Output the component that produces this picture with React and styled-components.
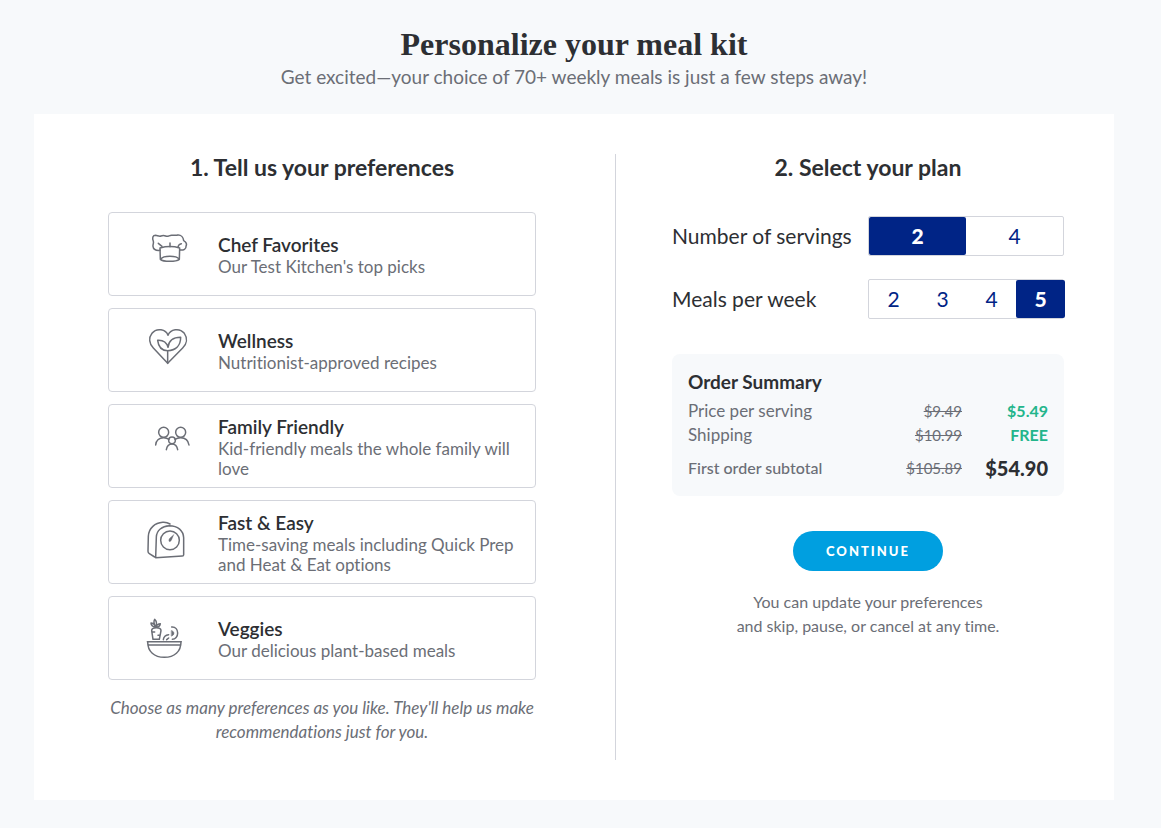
import React, { useState } from 'react';
import styled, { createGlobalStyle } from 'styled-components';

const GlobalStyle = createGlobalStyle`
  *, *::before, *::after {
    box-sizing: border-box;
  }

  body {
    margin: 0;
    background-color: #f7f9fb;
    color: #2d2f33;
    font-family: Lato, 'Open Sans', sans-serif;
    font-variant-ligatures: none;
  }

  h1, h2, h3, p {
    margin: 0;
  }
`;

const ChefIcon = () => (
  <Icon viewBox="-6 12 180 180" aria-hidden="true">
    <path d="M60 91C48 92 40 88 39 79C38 73 42 70 40 64C36 54 38 46 47 46C53 47 58 50 63 48C68 46 72 46 77 48C84 52 88 45 96 46C102 44 107 48 113 45C123 44 130 52 131 62C138 66 141 73 138 79C139 87 131 91 120 90" />
    <path d="M60 84C78 79 102 79 119 84M60 84L61 118C70 126 108 126 118 118L119 84" />
    <path d="M63 117C70 106 109 106 117 117M55 70L66 79M90 69V80M124 71C118 72 115 76 114 81" />
  </Icon>
);

const WellnessIcon = () => (
  <Icon viewBox="-6 0 180 180" aria-hidden="true">
    <path d="M84 46C78 28 50 22 36 40C25 54 28 71 40 84L83 130L128 84C141 71 143 54 133 40C118 22 91 28 84 46Z" />
    <path d="M83 130V92M83 92C64 92 55 79 53 61C69 60 80 67 84 82C86 63 98 52 122 52C122 76 108 91 83 92Z" />
  </Icon>
);

const FamilyIcon = () => (
  <Icon viewBox="-6 3 180 180" aria-hidden="true">
    <circle cx="71" cy="52" r="15" />
    <circle cx="122" cy="52" r="15" />
    <circle cx="96" cy="76" r="10" />
    <path d="M47 90C48 76 58 68 71 68C78 68 83 70 87 73M105 73C109 70 115 68 122 68C136 68 145 77 147 90" />
    <path d="M79 104C81 93 87 87 96 87C105 87 111 93 113 104" />
  </Icon>
);

const TimerIcon = () => (
  <Icon viewBox="-6 -9 180 180" aria-hidden="true">
    <path d="M47 128L49 66C50 46 66 33 88 32C114 32 130 48 131 68V119Q131 123 127 123Z" />
    <path d="M44 126L28 116Q24 114 24 109L25 64C26 38 46 24 68 22Q80 21 90 27" />
    <circle cx="90" cy="76" r="28" />
    <path d="M101 59L89 70Q84 76 88 80Q93 80 95 74Z" fill="currentColor" strokeWidth="1" />
  </Icon>
);

const VeggiesIcon = () => (
  <Icon viewBox="-6 -6 180 180" aria-hidden="true">
    <path d="M22 95H124M26 105H121M23 95C23 125 43 142 73 142C103 142 123 125 123 95" />
    <path d="M39 88L35 62C35 50 63 50 63 62L58 88ZM37 66H44M54 76H60" />
    <path d="M47 52C37 50 33 46 33 39C41 40 46 44 47 52C41 41 41 33 44 28C50 33 51 42 47 52C50 45 54 41 61 41C60 48 55 52 47 52" />
    <path d="M70 89C71 80 77 75 86 74M80 89L86 84" />
    <path d="M95 51C107 50 113 59 113 69C113 80 106 88 97 88" />
    <path d="M95 62C104 64 104 75 95 78Z" fill="currentColor" strokeWidth="2" />
  </Icon>
);

const preferences = [
  { id: 'chef', title: 'Chef Favorites', text: "Our Test Kitchen's top picks", icon: ChefIcon },
  { id: 'wellness', title: 'Wellness', text: 'Nutritionist-approved recipes', icon: WellnessIcon },
  { id: 'family', title: 'Family Friendly', text: 'Kid-friendly meals the whole family will love', icon: FamilyIcon },
  { id: 'fast', title: 'Fast & Easy', text: 'Time-saving meals including Quick Prep and Heat & Eat options', icon: TimerIcon },
  { id: 'veggies', title: 'Veggies', text: 'Our delicious plant-based meals', icon: VeggiesIcon },
];

const OptionPicker = ({ label, name, options, value, onChange }) => (
  <PickerRow role="radiogroup" aria-label={label}>
    <PickerLabel>{label}</PickerLabel>
    <Segments>
      {options.map((option) => (
        <Segment key={option} $active={option === value}>
          <HiddenInput
            type="radio"
            name={name}
            checked={option === value}
            onChange={() => onChange(option)}
          />
          {option}
        </Segment>
      ))}
    </Segments>
  </PickerRow>
);

const App = () => {
  const [selected, setSelected] = useState([]);
  const [servings, setServings] = useState(2);
  const [meals, setMeals] = useState(5);

  const toggle = (id) => {
    setSelected(selected.includes(id) ? selected.filter((item) => item !== id) : [...selected, id]);
  };

  return (
    <Page>
      <GlobalStyle />
      <Header>
        <Title>Personalize your meal kit</Title>
        <Subtitle>Get excited—your choice of 70+ weekly meals is just a few steps away!</Subtitle>
      </Header>
      <Panel>
        <Preferences>
          <StepTitle>1. Tell us your preferences</StepTitle>
          <CardList>
            {preferences.map(({ id, title, text, icon: PreferenceIcon }) => (
              <Card key={id} $active={selected.includes(id)}>
                <HiddenInput
                  type="checkbox"
                  checked={selected.includes(id)}
                  onChange={() => toggle(id)}
                />
                <PreferenceIcon />
                <CardText>
                  <CardTitle>{title}</CardTitle>
                  <CardDescription>{text}</CardDescription>
                </CardText>
              </Card>
            ))}
          </CardList>
          <Hint>
            Choose as many preferences as you like. They'll help us make
            <br />
            recommendations just for you.
          </Hint>
        </Preferences>
        <Plan>
          <StepTitle>2. Select your plan</StepTitle>
          <Pickers>
            <OptionPicker
              label="Number of servings"
              name="servings"
              options={[2, 4]}
              value={servings}
              onChange={setServings}
            />
            <OptionPicker
              label="Meals per week"
              name="meals"
              options={[2, 3, 4, 5]}
              value={meals}
              onChange={setMeals}
            />
          </Pickers>
          <Summary>
            <SummaryTitle>Order Summary</SummaryTitle>
            <SummaryTable>
              <tbody>
                <tr>
                  <th scope="row">Price per serving</th>
                  <td><s>$9.49</s></td>
                  <Deal>$5.49</Deal>
                </tr>
                <tr>
                  <th scope="row">Shipping</th>
                  <td><s>$10.99</s></td>
                  <Deal>FREE</Deal>
                </tr>
                <TotalRow>
                  <th scope="row">First order subtotal</th>
                  <td><s>$105.89</s></td>
                  <Total>$54.90</Total>
                </TotalRow>
              </tbody>
            </SummaryTable>
          </Summary>
          <ContinueButton type="button">CONTINUE</ContinueButton>
          <Note>
            You can update your preferences
            <br />
            and skip, pause, or cancel at any time.
          </Note>
        </Plan>
      </Panel>
    </Page>
  );
};

const Page = styled.main`
  min-height: 100vh;
  padding: 24px 47px 28px 34px;
`;

const Header = styled.header`
  margin-bottom: 24px;
  text-align: center;
`;

const Title = styled.h1`
  font-family: 'Liberation Serif', serif;
  font-size: 32px;
  font-weight: 700;
  line-height: 40px;
`;

const Subtitle = styled.p`
  color: #6b6e76;
  font-size: 19px;
  line-height: 26px;
`;

const Panel = styled.div`
  display: grid;
  grid-template-columns: 582fr 498fr;
  max-width: 1080px;
  margin: 0 auto;
  padding: 40px 0;
  background-color: #fff;
`;

const Preferences = styled.section`
  padding: 0 79px 16px 74px;
  border-right: 1px solid #d3d5dc;
`;

const Plan = styled.section`
  display: flex;
  flex-direction: column;
  padding: 0 50px 0 56px;
`;

const StepTitle = styled.h2`
  font-size: 23px;
  font-weight: 700;
  line-height: 26px;
  text-align: center;
`;

const CardList = styled.div`
  display: flex;
  flex-direction: column;
  gap: 12px;
  margin-top: 32px;
`;

const Card = styled.label`
  position: relative;
  display: flex;
  align-items: center;
  gap: 20px;
  min-height: 84px;
  padding: 8px 16px 8px 29px;
  border: 1px solid ${({ $active }) => ($active ? '#002486' : '#d3d5dc')};
  border-radius: 4px;
  cursor: pointer;
`;

const HiddenInput = styled.input`
  position: absolute;
  inset: 0;
  width: 100%;
  height: 100%;
  margin: 0;
  opacity: 0;
  cursor: pointer;
`;

const Icon = styled.svg`
  flex: none;
  width: 60px;
  height: 60px;
  color: #6b6e76;
  fill: none;
  stroke: currentColor;
  stroke-width: 4.5;
  stroke-linecap: round;
  stroke-linejoin: round;
`;

const CardText = styled.span`
  display: flex;
  flex-direction: column;
  padding-top: 2px;
`;

const CardTitle = styled.span`
  font-size: 19px;
  font-weight: 600;
  line-height: 24px;
`;

const CardDescription = styled.span`
  color: #6b6e76;
  font-size: 17px;
  line-height: 20px;
`;

const Hint = styled.p`
  margin: 16px -16px 0;
  color: #6b6e76;
  font-size: 17px;
  font-style: italic;
  line-height: 24px;
  text-align: center;
`;

const Pickers = styled.div`
  display: flex;
  flex-direction: column;
  gap: 23px;
  margin-top: 36px;
`;

const PickerRow = styled.div`
  display: flex;
  align-items: center;
  justify-content: space-between;
`;

const PickerLabel = styled.span`
  font-size: 21px;
  line-height: 24px;
`;

const Segments = styled.div`
  display: flex;
  width: 50%;
  height: 40px;
  border: 1px solid #d3d5dc;
  border-radius: 2px;
`;

const Segment = styled.label`
  position: relative;
  display: flex;
  flex: 1 0 49px;
  align-items: center;
  justify-content: center;
  border-radius: 2px;
  background-color: ${({ $active }) => ($active ? '#002486' : 'transparent')};
  color: ${({ $active }) => ($active ? '#fff' : '#002486')};
  font-size: 21px;
  font-weight: ${({ $active }) => ($active ? 900 : 400)};
  line-height: 24px;
`;

const Summary = styled.div`
  margin-top: 35px;
  padding: 16px;
  border-radius: 8px;
  background-color: #f7f9fb;
`;

const SummaryTitle = styled.h3`
  margin-bottom: 5px;
  font-size: 19px;
  font-weight: 700;
  line-height: 24px;
`;

const SummaryTable = styled.table`
  width: 100%;
  border-collapse: collapse;
  color: #6b6e76;
  font-size: 15px;
  line-height: 24px;

  th, td {
    padding: 0;
    font-weight: 400;
    text-align: left;
  }

  th {
    font-size: 17px;
  }

  td {
    text-align: right;
  }
`;

const Deal = styled.td`
  && {
    width: 86px;
    color: #23b58b;
    font-size: 16px;
    font-weight: 700;
  }
`;

const TotalRow = styled.tr`
  && th, && td {
    padding-top: 9px;
  }

  && th {
    font-size: 16px;
    font-weight: 500;
  }
`;

const Total = styled.td`
  &&& {
    color: #2d2f33;
    font-size: 20px;
    font-weight: 900;
  }
`;

const ContinueButton = styled.button`
  align-self: center;
  height: 40px;
  margin-top: 35px;
  padding: 0 33px;
  border: none;
  border-radius: 20px;
  background-color: #009fe0;
  color: #fff;
  font-family: inherit;
  font-size: 13px;
  font-weight: 900;
  letter-spacing: 2px;
  cursor: pointer;
`;

const Note = styled.p`
  margin-top: 19px;
  color: #6b6e76;
  font-size: 16px;
  line-height: 24px;
  text-align: center;
`;

export default App;
